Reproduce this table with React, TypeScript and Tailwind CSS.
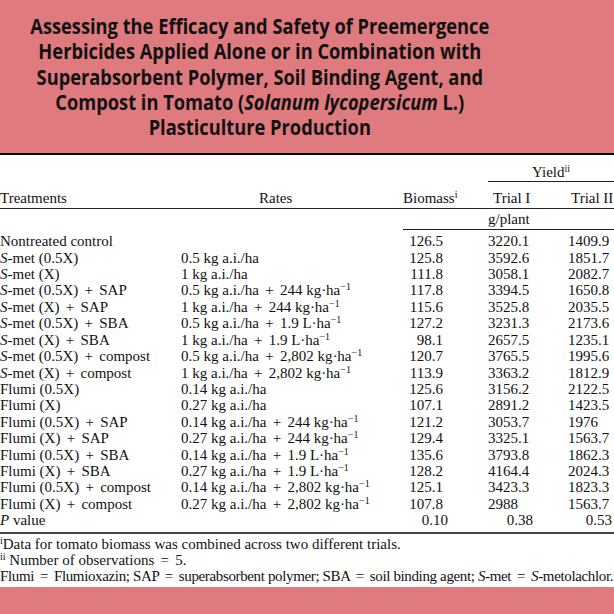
import React from 'react';

type Row = {
  treatment: string;
  rate: string;
  unit?: string;
  biomass: string;
  trial1: string;
  trial2: string;
};

const rows: Row[] = [
  { treatment: 'Nontreated control', rate: '', biomass: '126.5', trial1: '3220.1', trial2: '1409.9' },
  { treatment: 'S-met (0.5X)', rate: '0.5 kg a.i./ha', biomass: '125.8', trial1: '3592.6', trial2: '1851.7' },
  { treatment: 'S-met (X)', rate: '1 kg a.i./ha', biomass: '111.8', trial1: '3058.1', trial2: '2082.7' },
  { treatment: 'S-met (0.5X) + SAP', rate: '0.5 kg a.i./ha + 244', unit: 'kg·ha', biomass: '117.8', trial1: '3394.5', trial2: '1650.8' },
  { treatment: 'S-met (X) + SAP', rate: '1 kg a.i./ha + 244', unit: 'kg·ha', biomass: '115.6', trial1: '3525.8', trial2: '2035.5' },
  { treatment: 'S-met (0.5X) + SBA', rate: '0.5 kg a.i./ha + 1.9', unit: 'L·ha', biomass: '127.2', trial1: '3231.3', trial2: '2173.6' },
  { treatment: 'S-met (X) + SBA', rate: '1 kg a.i./ha + 1.9', unit: 'L·ha', biomass: '98.1', trial1: '2657.5', trial2: '1235.1' },
  { treatment: 'S-met (0.5X) + compost', rate: '0.5 kg a.i./ha + 2,802', unit: 'kg·ha', biomass: '120.7', trial1: '3765.5', trial2: '1995.6' },
  { treatment: 'S-met (X) + compost', rate: '1 kg a.i./ha + 2,802', unit: 'kg·ha', biomass: '113.9', trial1: '3363.2', trial2: '1812.9' },
  { treatment: 'Flumi (0.5X)', rate: '0.14 kg a.i./ha', biomass: '125.6', trial1: '3156.2', trial2: '2122.5' },
  { treatment: 'Flumi (X)', rate: '0.27 kg a.i./ha', biomass: '107.1', trial1: '2891.2', trial2: '1423.5' },
  { treatment: 'Flumi (0.5X) + SAP', rate: '0.14 kg a.i./ha + 244', unit: 'kg·ha', biomass: '121.2', trial1: '3053.7', trial2: '1976' },
  { treatment: 'Flumi (X) + SAP', rate: '0.27 kg a.i./ha + 244', unit: 'kg·ha', biomass: '129.4', trial1: '3325.1', trial2: '1563.7' },
  { treatment: 'Flumi (0.5X) + SBA', rate: '0.14 kg a.i./ha + 1.9', unit: 'L·ha', biomass: '135.6', trial1: '3793.8', trial2: '1862.3' },
  { treatment: 'Flumi (X) + SBA', rate: '0.27 kg a.i./ha + 1.9', unit: 'L·ha', biomass: '128.2', trial1: '4164.4', trial2: '2024.3' },
  { treatment: 'Flumi (0.5X) + compost', rate: '0.14 kg a.i./ha + 2,802', unit: 'kg·ha', biomass: '125.1', trial1: '3423.3', trial2: '1823.3' },
  { treatment: 'Flumi (X) + compost', rate: '0.27 kg a.i./ha + 2,802', unit: 'kg·ha', biomass: '107.8', trial1: '2988', trial2: '1563.7' },
];

// typeset operators get a bit more room than a plain space
function Op({ children }: { children: React.ReactNode }) {
  return <span className="mx-[2.5px]">{children}</span>;
}

function withOps(text: string) {
  const parts = text.split(' + ');
  return parts.map((p, i) => (
    <React.Fragment key={i}>
      {i > 0 && (
        <>
          {' '}
          <Op>+</Op>{' '}
        </>
      )}
      {p}
    </React.Fragment>
  ));
}

function Treatment({ name }: { name: string }) {
  if (name.startsWith('S-met')) {
    return (
      <>
        <i>S</i>
        {withOps(name.slice(1))}
      </>
    );
  }
  return <>{withOps(name)}</>;
}

function Sup({ children }: { children: React.ReactNode }) {
  return <sup className="text-[10px] leading-none -top-[5px]">{children}</sup>;
}

export default function App() {
  return (
    <div className="w-[614px] h-[614px] bg-[#df7a7e] overflow-hidden">
      {/* Title */}
      <div className="flex justify-center pr-[94px] pt-[14px] pb-[13px]">
        <div className="w-max whitespace-nowrap text-center font-['Open_Sans',sans-serif] font-bold text-[21px] leading-[25.25px] text-[#111] scale-x-[0.87]">
          Assessing the Efficacy and Safety of Preemergence
          <br />
          Herbicides Applied Alone or in Combination with
          <br />
          Superabsorbent Polymer, Soil Binding Agent, and
          <br />
          Compost in Tomato (<i>Solanum lycopersicum</i> L.)
          <br />
          Plasticulture Production
        </div>
      </div>

      {/* Table */}
      <div className="bg-white border-t-2 border-black font-['Liberation_Serif',serif] text-[15px] text-[#111]">
        <div className="grid grid-cols-[181px_222px_85px_80px_46px]">
          {/* Header row 1 */}
          <div className="col-start-4 col-span-2 border-b border-[#222] pt-[9px] pb-[1px] leading-[16px] text-center">
            Yield<Sup>ii</Sup>
          </div>

          {/* Header row 2 */}
          <div className="col-start-1 border-b border-[#222] pt-[8px] pb-[2px] leading-[16px]">Treatments</div>
          <div className="border-b border-[#222] pt-[8px] pb-[2px] leading-[16px] pl-[78px]">Rates</div>
          <div className="border-b border-[#222] pt-[8px] pb-[2px] leading-[16px]">
            Biomass<Sup>i</Sup>
          </div>
          <div className="border-b border-[#222] pt-[8px] pb-[2px] leading-[16px] pl-[5px]">Trial I</div>
          <div className="border-b border-[#222] pt-[8px] pb-[2px] leading-[16px] pl-[3px] whitespace-nowrap">Trial II</div>

          {/* Units row */}
          <div className="col-start-3 col-span-3 border-b border-[#222] pt-[2px] pb-[2px] leading-[16px] pl-[85px]">
            g/plant
          </div>

          {/* Body */}
          <div className="col-span-5 h-[3px]" />
          {rows.map((r) => (
            <React.Fragment key={r.treatment}>
              <div className="leading-[16.4px] whitespace-nowrap">
                <Treatment name={r.treatment} />
              </div>
              <div className="leading-[16.4px] whitespace-nowrap">
                {withOps(r.rate)}
                {r.unit && (
                  <>
                    {' '}
                    {r.unit}
                    <Sup>−1</Sup>
                  </>
                )}
              </div>
              <div className="leading-[16.4px] text-right pr-[45px]">{r.biomass}</div>
              <div className="leading-[16.4px]">{r.trial1}</div>
              <div className="leading-[16.4px]">{r.trial2}</div>
            </React.Fragment>
          ))}

          {/* P value */}
          <div className="col-span-2 leading-[16.4px] pb-[3px] border-b-2 border-[#444]">
            <i>P</i> value
          </div>
          <div className="leading-[16.4px] text-right pr-[40px] pb-[3px] border-b-2 border-[#444]">0.10</div>
          <div className="leading-[16.4px] text-right pr-[35px] pb-[3px] border-b-2 border-[#444]">0.38</div>
          <div className="leading-[16.4px] text-right pr-[2px] pb-[3px] border-b-2 border-[#444]">0.53</div>
        </div>

        {/* Footnotes */}
        <div className="pt-[2px] pb-[3px] leading-[16px] whitespace-nowrap">
          <div>
            <Sup>i</Sup>Data for tomato biomass was combined across two different trials.
          </div>
          <div>
            <Sup>ii</Sup> Number of observations <Op>=</Op> 5.
          </div>
          <div className="tracking-[-0.36px]">
            Flumi <Op>=</Op> Flumioxazin; SAP <Op>=</Op> superabsorbent polymer; SBA <Op>=</Op> soil binding agent;{' '}
            <i>S</i>-met <Op>=</Op> <i>S</i>-metolachlor.
          </div>
        </div>
      </div>
    </div>
  );
}
